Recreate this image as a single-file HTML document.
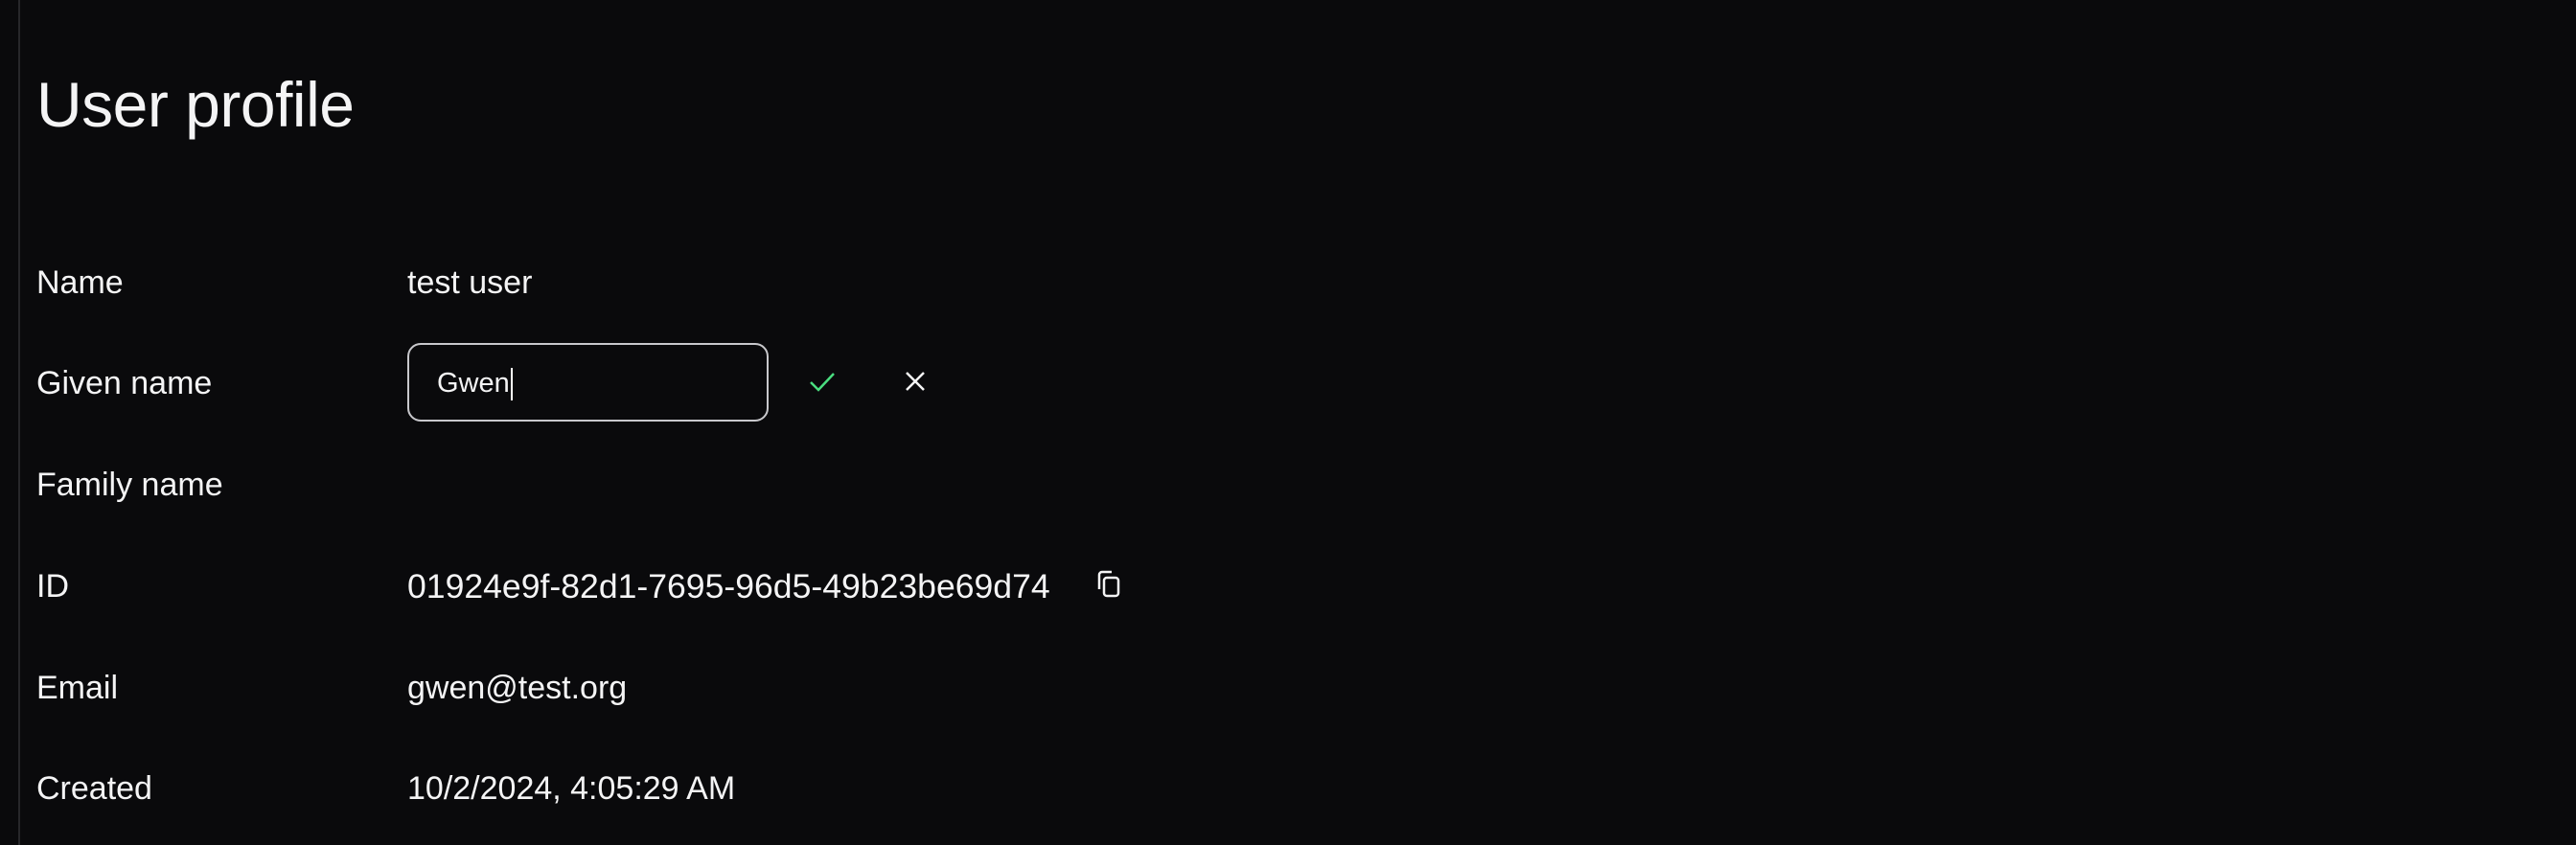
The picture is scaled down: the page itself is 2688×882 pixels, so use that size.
<!DOCTYPE html>
<html><head><meta charset="utf-8"><style>
html,body{margin:0;padding:0;width:2688px;height:882px;background:#0a0a0c;overflow:hidden;font-family:"Liberation Sans",sans-serif;color:#f4f4f5}
.line{position:absolute;left:19px;top:0;width:2px;height:882px;background:#27272a}
h1{position:absolute;left:38px;top:64px;margin:0;font-weight:400;font-size:66px;line-height:90px;letter-spacing:-0.5px}
.row{position:absolute;left:38px;height:60px;line-height:60px;font-size:34px;width:2600px}
.row .v{position:absolute;left:387px;top:0;white-space:nowrap}
.inp{position:absolute;left:425px;top:358px;width:373px;height:78px;border:2px solid #c8c8cc;border-radius:14px;box-sizing:content-box}
.inp span{position:absolute;left:29px;top:1px;line-height:78px;font-size:29px}
.inp i{display:inline-block;width:2px;height:34px;background:#fff;vertical-align:middle;margin-left:1px}
svg{position:absolute}
</style></head><body>
<div class="line"></div>
<h1>User profile</h1>
<div class="row" style="top:265px">Name<span class="v">test user</span></div>
<div class="row" style="top:370px">Given name</div>
<div class="inp"><span>Gwen<i></i></span></div>
<svg style="left:843px;top:385px" width="30" height="26" viewBox="0 0 30 26"><path d="M3 14 L11 22 L27 5" fill="none" stroke="#4ade80" stroke-width="2.5"/></svg>
<svg style="left:943px;top:386px" width="24" height="24" viewBox="0 0 24 24"><path d="M3 3 L21 21 M21 3 L3 21" fill="none" stroke="#f4f4f5" stroke-width="2.5"/></svg>
<div class="row" style="top:476px">Family name</div>
<div class="row" style="top:582px">ID<span class="v" style="font-size:35.6px">01924e9f-82d1-7695-96d5-49b23be69d74</span></div>
<svg style="left:1141px;top:593px" width="32" height="32" viewBox="0 0 32 32"><rect x="11" y="10" width="15" height="19" rx="3" fill="none" stroke="#f4f4f5" stroke-width="2.5"/><path d="M6 22 V7 a3 3 0 0 1 3 -3 H19" fill="none" stroke="#f4f4f5" stroke-width="2.5"/></svg>
<div class="row" style="top:688px">Email<span class="v">gwen@test.org</span></div>
<div class="row" style="top:793px">Created<span class="v">10/2/2024, 4:05:29 AM</span></div>
</body></html>
